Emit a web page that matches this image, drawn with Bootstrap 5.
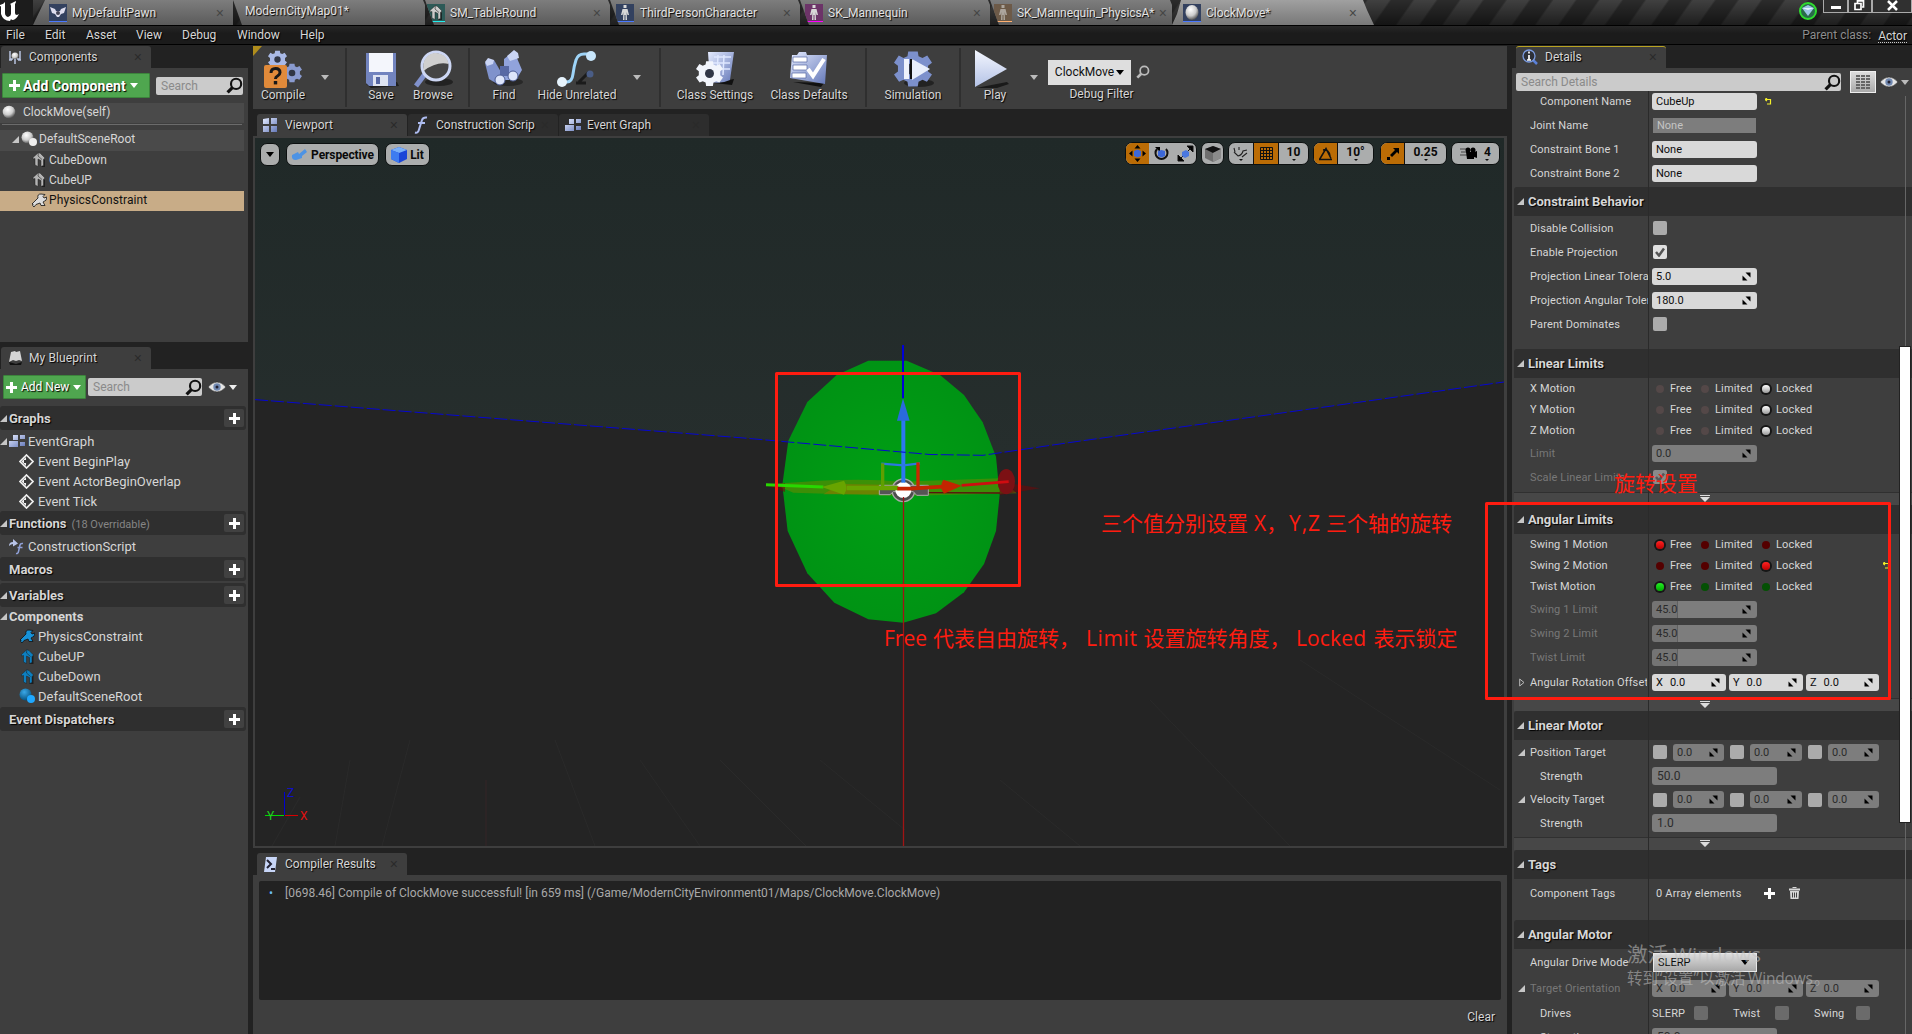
<!DOCTYPE html>
<html lang="en">
<head>
<meta charset="utf-8">
<title>ClockMove - Blueprint Editor</title>
<link rel="stylesheet" href="https://cdn.jsdelivr.net/npm/bootstrap@5.3.0/dist/css/bootstrap.min.css">
<style>
html,body{height:100%;overflow:hidden}
body{background:#222;color:#d6d6d6;font-family:Roboto,"Liberation Sans",sans-serif;font-size:12px;line-height:1;text-shadow:none;width:1912px;height:1034px;margin:0}
svg{display:block;flex:none}
.sh{text-shadow:1px 1px 1px #000}
.titlebar{height:25px;background:linear-gradient(#0000,#0008),repeating-linear-gradient(125deg,#2b2b2b 0 17px,#404040 19px 36px,#2b2b2b 38px)}
.logo{width:33px;padding-left:0;background:#1c1c1c}
.doc{height:25px;background:linear-gradient(#7d7d7d,#5b5b5b);color:#e2e2e2;padding-right:9px;clip-path:polygon(0 0,calc(100% - 2px) 0,calc(100% + 8px) 100%,9px 100%);margin-right:0}
.doc.first{clip-path:polygon(12px 0,100% 0,100% 100%,0 100%)}
.doc.now{background:linear-gradient(#a0a0a0,#787878);clip-path:polygon(9px 0,calc(100% - 11px) 0,calc(100% - 7px) 10px,100% 100%,0 100%,5px 14px)}
.docicon{width:18px;height:18px;border-bottom:1px solid #4a78ff;background:#33415f}
.cls{color:#2a2a2a;font-size:14px;font-family:"Liberation Sans",sans-serif;line-height:10px}
.doc .cls{color:#454545}
.menubar{height:20px;background:linear-gradient(#272727,#1b1b1b 40%,#1b1b1b);border-top:1px solid #000;border-bottom:1px solid #000;padding-left:6px}
.winbtn{height:13px;border:1px solid #aaa;border-top:0;background:#303030;color:#fff}
.leftcol{width:248px;margin-right:5px}
.midcol{width:1254px;margin-right:5px}
.rightcol{width:400px}
.ptab{width:150px;height:22px;background:#3e3e3e;border-radius:3px 3px 0 0;padding-right:9px}
.ptab.off{background:#2d2d2d}
.pbody{background:#3e3e3e}
.greenbtn{background:#4fa64f;border:1px solid #3c843c;color:#fff;border-radius:1px}
.find{background:#cbcbcb;color:#8a8a8a;border-radius:2px;height:18px}
.trow{height:20px;font-size:13px}
.trow.lit{background:#4a4a4a}
.trow.sel{background:#c8ac87;color:#111}
.tree .trow{font-size:12px;padding-bottom:3px}
.sec{height:24px;background:#2f2f2f;width:246px;border-radius:3px;font-size:13px;font-weight:700}
.plus{width:20px;height:18px;background:#414141;border-radius:2px;margin-right:2px}
.toolbar2{height:63px;background:#3e3e3e}
.tool{height:57px;padding-bottom:5px}
.vr2{width:2px;height:59px;background:#2f2f2f}
.vp{height:712px;border:2px solid #3e3e3e;border-right-width:3px}
.pill{height:23px;background:#abadad;color:#0a0a0a;border:1px solid #0c1010;border-radius:7px;font-weight:700;overflow:hidden;font-size:12px}
.pill .on{background:#bb6c05}
.pill .cellx{height:100%;position:relative}
.dot:after{content:"";position:absolute;bottom:3px;left:50%;margin-left:-2px;border:2px solid transparent;border-top-color:#111;border-bottom:0}
.dot span{margin-bottom:4px}
.log{height:119px;background:#222;border-radius:2px;color:#a9a9a9}
.details{height:945px;overflow:hidden;font-size:11px;position:relative;letter-spacing:.14px}
.details:after{content:"";position:absolute;left:136px;top:0;bottom:0;width:1px;background:#2a2a2a}
.prow{height:24px;display:flex;align-items:center;padding-left:18px}
.prow.m{height:21px}
.prow .lab{width:119px;flex:none;overflow:hidden;white-space:nowrap;line-height:16px;padding-top:1px}
.prow.m .lab{padding-top:0}
.prow .lab.in{padding-left:10px}
.prow.dim .lab{color:#787878}
.cat{height:29px;background:#2f2f2f;margin-left:2px;padding-left:3px;font-size:13px;font-weight:700;border-radius:3px 0 0 0;letter-spacing:0}
.strip{height:13px;margin-left:2px;background:#474747;border-top:1px solid #303030;padding:2px 0 0 186px}
.val{height:17px;width:105px;background:#d9d9d9;color:#0d0d0d;border-radius:3px;margin-left:3px;padding:0 6px 0 4px;display:flex;align-items:center;justify-content:space-between;letter-spacing:0}
.val.g{background:#7d7d7d;color:#2b2b2b}
.val.wide{width:125px;height:18px;font-size:12px;padding-left:5px}
.val.t{width:74px}
.val.s{width:51px;margin-left:6px}
.val.fillx{background:linear-gradient(90deg,#747474 25px,#606060 25px,#606060 26px,#7d7d7d 26px)}
.cb{width:14px;height:14px;background:#ababab;border-radius:2px;margin-left:4px;flex:none;display:flex;align-items:center;justify-content:center}
.cb.off{background:#6b6b6b}
.rd{width:8px;height:8px;border-radius:50%;background:#544848;flex:none}
.rd.r{background:#540000}.rd.g{background:#045004}
.rd.a{box-shadow:0 0 0 2px #161616;background:linear-gradient(#fff,#999)}
.rd.a.r{background:linear-gradient(#f22,#b00)}.rd.a.g{background:linear-gradient(#2e2,#0a0)}
.thumb{position:absolute;left:388px;top:258px;width:10px;height:475px;background:#fff;box-shadow:0 0 0 1px #222;z-index:2}
.rail{position:absolute;left:393px;top:7px;bottom:0;width:1px;background:#666}
.ov{position:absolute;left:0;top:0;pointer-events:none;z-index:5}
</style>
<script src="https://cdn.jsdelivr.net/npm/bootstrap@5.3.0/dist/js/bootstrap.bundle.min.js"></script>
</head>
<body class="d-flex flex-column position-relative">
<svg width="0" height="0" class="position-absolute">
 <defs>
  <linearGradient id="bl" x1="0" y1="0" x2="1" y2="1"><stop offset="0" stop-color="#e4ebff"/><stop offset="1" stop-color="#6478b8"/></linearGradient>
  <linearGradient id="wg" x1="0" y1="0" x2="0" y2="1"><stop offset="0" stop-color="#f4f7ff"/><stop offset="1" stop-color="#b4c2e6"/></linearGradient>
  <radialGradient id="ball" cx=".4" cy=".3" r=".7"><stop offset="0" stop-color="#fff"/><stop offset=".6" stop-color="#ccc"/><stop offset="1" stop-color="#555"/></radialGradient>
  <radialGradient id="bball" cx=".4" cy=".3" r=".7"><stop offset="0" stop-color="#3aa8e8"/><stop offset="1" stop-color="#06527f"/></radialGradient>
  <symbol id="spin" viewBox="0 0 9 9"><path d="M3.500 .5H8.500V5.500zM.5 3.500V8.500H5.500z"/></symbol>
  <symbol id="tri" viewBox="0 0 7 7"><path d="M7 0V7H0z" fill="#c6c6c6"/></symbol>
  <symbol id="dn" viewBox="0 0 8 5"><path d="M0 0H8L4 5z"/></symbol>
  <symbol id="mag" viewBox="0 0 16 16"><circle cx="9.500" cy="6.500" r="4.800" fill="none" stroke="currentColor" stroke-width="2"/><path d="M6 10L1.500 14.500" stroke="currentColor" stroke-width="3"/></symbol>
  <symbol id="pl" viewBox="0 0 11 11"><path d="M4 0h3v4h4v3H7v4H4V7H0V4h4z" fill="#fff"/></symbol>
  <symbol id="eye" viewBox="0 0 18 12"><path d="M0 6Q9-4 18 6Q9 16 0 6" fill="#e4e4e4" stroke="#222" stroke-width=".6"/><circle cx="9" cy="6" r="3.700" fill="#7088b0"/><circle cx="9" cy="6" r="1.500" fill="#223"/></symbol>
  <symbol id="house" viewBox="0 0 14 15"><path d="M9 3l4 4v8H9z" fill="#111" opacity=".7"/><path d="M6.500 .5L8.500 1.500 12.500 5.500V7.500L11.500 7.200V13.500L9 14.500V8.500L6 7V14.500L3 13V6.500L1 7V5.500z" fill="currentColor" stroke="#222" stroke-width=".5"/><path d="M6.500 .5L6 4 10 7.500" stroke="#222" stroke-width=".6" fill="none"/></symbol>
  <symbol id="cons" viewBox="0 0 16 14"><path d="M1 11L7 5Q6 1 10 1l4 .5-2 2 1 1.500 3-1q0 4-4 5l2 3.500h-4l-1-2.500-4 1.500-2 2.500q-2-1-1-3z" fill="currentColor" stroke="#111" stroke-width=".8"/></symbol>
  <symbol id="diam" viewBox="0 0 15 15"><path d="M7.500 1L14 7.500 7.500 14 1 7.500z" fill="none" stroke="#eee" stroke-width="1.700"/><path d="M7 3v9L2.500 7.500z" fill="#eee"/><path d="M5 6h3V4l3 3.500L8 11V9H5z" fill="#3a3a3a"/></symbol>
  <symbol id="eg" viewBox="0 0 16 12"><path d="M4 0h5v5H4zM11 0h5v4h-5zM0 6h9v6H0zM11 7h5v4h-5z" fill="url(#bl)"/></symbol>
  <symbol id="gear" viewBox="-12 -12 24 24"><path d="M-3-11h6l.5 3 2.500 1 3-1.500 3 4.500-2.500 2v3.500l2.500 2-3.200 4.500-2.800-1.200-2.500 1.200-.5 3h-6l-.5-3-2.500-1.200-2.800 1.200L-12 3.500l2.500-2V-2L-12-4l3-4.500 3 1.500 2.500-1z"/><circle r="4" fill="#303646"/></symbol>
  <symbol id="more" viewBox="0 0 10 7"><path d="M0 0h10v1H0zM0 2h10L5 7z" fill="#ddd"/></symbol>
  <symbol id="person" viewBox="0 0 18 17"><path d="M7.500 1h3v3h-3zM6.500 5h5l1.500 6h-1.500l-.8-3 .3 8H9.500V11h-1v5H7l.3-8-.8 3H5z" fill="#d8d8d8"/></symbol>
  <symbol id="undo" viewBox="0 0 7 7"><path d="M0 1.500h5.500v4.500H2M0 1.500l2-1.500M0 1.500l2 1.500" fill="none" stroke="#f2ee2a" stroke-width="1.200"/></symbol>
 </defs>
</svg>

<header class="titlebar d-flex flex-none">
 <div class="logo"><svg width="22" height="22" viewBox="0 0 22 22"><path d="M0 5Q4 4 5 2v11q0 3 3 4 3-1 3-3V6q0-2-1-2 2-1 6-3 0 2-1 3v9q0 2 2 2l2-1q-3 6-7 6l-1-1-1 2q-7 0-9-7V7q0-1-1-1z" fill="#fff"/></svg></div>
 <div class="doc first d-flex align-items-center" style="width:200px"><div class="docicon ms-3"><svg width="18" height="17"><path d="M1 3l5 2 1 2h4l1-2 5-2-2 6-3 1-2 3H8L6 10 3 9z" fill="#dde"/><circle cx="9" cy="9" r="2" fill="#445"/></svg></div><span class="sh" style="margin-left:5px">MyDefaultPawn</span><span class="cls ms-auto">×</span></div>
 <div class="doc d-flex align-items-center" style="width:192px"><span class="sh" style="margin:-3px 0 0 12px">ModernCityMap01*</span></div>
 <div class="doc d-flex align-items-center" style="width:185px"><div class="docicon" style="margin-left:2px;border-color:#2ee;background:#2d5a57;color:#ccc"><svg width="18" height="17"><use href="#house" x="2" y="1" width="14" height="15"/></svg></div><span class="sh" style="margin-left:5px">SM_TableRound</span><span class="cls ms-auto">×</span></div>
 <div class="doc d-flex align-items-center" style="width:190px"><div class="docicon" style="margin-left:6px"><svg width="18" height="17"><use href="#person"/></svg></div><span class="sh" style="margin-left:6px">ThirdPersonCharacter</span><span class="cls ms-auto">×</span></div>
 <div class="doc d-flex align-items-center" style="width:190px"><div class="docicon" style="margin-left:5px;background:#6c3468;border-color:#f0f"><svg width="18" height="17"><use href="#person"/></svg></div><span class="sh" style="margin-left:5px">SK_Mannequin</span><span class="cls ms-auto">×</span></div>
 <div class="doc d-flex align-items-center" style="width:182px"><div class="docicon" style="margin-left:4px;background:#6d5a48;border-color:#ffb070"><svg width="18" height="17" opacity=".6"><use href="#person"/></svg></div><span class="sh" style="margin-left:5px;letter-spacing:-.1px">SK_Mannequin_PhysicsA*</span><span class="cls ms-auto" style="margin-right:-4px">×</span></div>
 <div class="doc now d-flex align-items-center" style="width:202px;padding-right:17px"><div class="docicon" style="margin-left:11px"><svg width="18" height="17"><ellipse cx="9" cy="8.500" rx="6.500" ry="7.500" fill="url(#ball)"/></svg></div><span class="sh" style="margin-left:5px">ClockMove*</span><span class="cls ms-auto">×</span></div>
 <div class="ms-auto d-flex">
  <svg width="26" height="24"><circle cx="11" cy="11" r="8" fill="#2a6a4a" stroke="#2fdc2f" stroke-width="2"/><path d="M5 8l6-3 6 3-6 8z" fill="#9cc4e4"/><path d="M5 8l6 2 6-2" fill="#e8f4ff"/></svg>
  <div class="winbtn" style="width:25px"><svg width="24" height="12"><path d="M7 6h10v3H7z" fill="#fff"/></svg></div>
  <div class="winbtn" style="width:24px"><svg width="22" height="12"><path d="M6 3.500h6v6H6zM8.500 3V.8h6V7H13" fill="none" stroke="#fff" stroke-width="1.700"/></svg></div>
  <div class="winbtn" style="width:40px"><svg width="38" height="12"><path d="M15 1l9 9M24 1l-9 9" stroke="#fff" stroke-width="2.500"/></svg></div>
 </div>
</header>
<nav class="menubar d-flex align-items-center sh">
 <span style="width:39px">File</span><span style="width:41px">Edit</span><span style="width:50px">Asset</span><span style="width:46px">View</span><span style="width:55px">Debug</span><span style="width:63px">Window</span><span>Help</span>
 <span class="ms-auto" style="color:#8d8d8d;margin-right:7px">Parent class:</span><span style="border-bottom:1px dotted #ccc;margin:2px 5px 0 0">Actor</span>
</nav>

<main class="d-flex flex-grow-1" style="padding-top:1px;min-height:0">
 <!-- component tree and blueprint members -->
 <aside class="leftcol d-flex flex-column">
  <div class="ptab d-flex align-items-center" style="margin-left:1px"><svg width="14" height="15" style="margin-left:7px"><circle cx="7" cy="6" r="3.500" fill="url(#ball)"/><path d="M2 1v8h3M12 1v8h-3M7 9v5M1 10h3M10 10h3" stroke="#b8c4e0" stroke-width="1.500" fill="none"/></svg><span class="sh" style="margin-left:7px">Components</span><span class="cls ms-auto">×</span></div>
  <div class="pbody tree" style="height:274px">
   <div class="d-flex align-items-center" style="padding:5px 0 0 2px;height:30px">
    <div class="greenbtn d-flex align-items-center sh fw-bold" style="width:148px;height:25px;font-size:14px;padding-left:6px;white-space:nowrap"><svg width="11" height="11"><use href="#pl"/></svg><span style="margin-left:3px;letter-spacing:.1px">Add Component</span><svg width="8" height="5" fill="#fff" style="margin-left:4px"><use href="#dn"/></svg></div>
    <div class="find d-flex align-items-center justify-content-between" style="width:87px;margin-left:6px;padding-left:5px"><span>Search</span><svg width="17" height="17" style="color:#111"><use href="#mag"/></svg></div>
   </div>
   <div class="trow lit d-flex align-items-center" style="margin-top:5px;width:244px"><svg width="15" height="16" style="margin-left:2px"><circle cx="7" cy="8" r="6.300" fill="url(#ball)"/></svg><span style="margin-left:6px">ClockMove(self)</span></div>
   <div style="height:1px;background:#6b6b6b;margin:1px 6px 5px 2px;width:240px"></div>
   <div class="trow lit d-flex align-items-center" style="width:244px;height:21px"><svg width="7" height="7" style="margin-left:12px"><use href="#tri"/></svg><svg width="17" height="16" style="margin-left:2px"><circle cx="6.500" cy="6.500" r="6" fill="url(#ball)"/><circle cx="12" cy="11" r="4" fill="#eee"/></svg><span style="margin-left:1px">DefaultSceneRoot</span></div>
   <div class="trow d-flex align-items-center" style="padding-left:32px"><svg width="14" height="15" style="color:#b4b4b4"><use href="#house"/></svg><span style="margin-left:3px">CubeDown</span></div>
   <div class="trow d-flex align-items-center" style="padding-left:32px"><svg width="14" height="15" style="color:#b4b4b4"><use href="#house"/></svg><span style="margin-left:3px">CubeUP</span></div>
   <div class="trow sel d-flex align-items-center" style="padding-left:31px;width:244px"><svg width="16" height="14" style="color:#ddd"><use href="#cons"/></svg><span style="margin-left:2px;letter-spacing:.1px">PhysicsConstraint</span></div>
  </div>
  <div class="ptab d-flex align-items-center" style="margin:5px 0 0 1px"><svg width="15" height="16" style="margin-left:7px"><path d="M1 12L3 2l4-1 1 1 4-1 2 10-3-1-3 1-3-1z" fill="#d5d5d5"/><path d="M1 12l7 2 6-2-1 3H2z" fill="#111"/></svg><span class="sh" style="margin-left:6px;letter-spacing:.1px">My Blueprint</span><span class="cls ms-auto">×</span></div>
  <div class="pbody flex-grow-1">
   <div class="d-flex align-items-center" style="padding:0 0 1px 3px;height:37px">
    <div class="greenbtn d-flex align-items-center sh" style="width:83px;height:24px;padding-left:2px"><svg width="11" height="11"><use href="#pl"/></svg><span style="margin-left:4px;white-space:nowrap">Add New</span><svg width="8" height="5" fill="#fff" style="margin-left:4px"><use href="#dn"/></svg></div>
    <div class="find d-flex align-items-center justify-content-between" style="width:114px;margin-left:2px;padding-left:5px"><span>Search</span><svg width="17" height="17" style="color:#111"><use href="#mag"/></svg></div>
    <svg width="18" height="12" style="margin-left:6px"><use href="#eye"/></svg><svg width="8" height="5" fill="#eee" style="margin-left:3px"><use href="#dn"/></svg>
   </div>
   <div class="sec d-flex align-items-center"><svg width="7" height="7"><use href="#tri"/></svg><span class="sh" style="margin-left:2px">Graphs</span><div class="plus d-flex align-items-center justify-content-center ms-auto"><svg width="11" height="11"><use href="#pl"/></svg></div></div>
   <div class="trow d-flex align-items-center" style="margin-top:1px"><svg width="7" height="7"><use href="#tri"/></svg><svg width="16" height="12" style="margin-left:2px"><use href="#eg"/></svg><span style="margin-left:3px">EventGraph</span></div>
   <div class="trow d-flex align-items-center" style="padding-left:19px"><svg width="15" height="15"><use href="#diam"/></svg><span style="margin-left:4px">Event BeginPlay</span></div>
   <div class="trow d-flex align-items-center" style="padding-left:19px"><svg width="15" height="15"><use href="#diam"/></svg><span style="margin-left:4px">Event ActorBeginOverlap</span></div>
   <div class="trow d-flex align-items-center" style="padding-left:19px"><svg width="15" height="15"><use href="#diam"/></svg><span style="margin-left:4px">Event Tick</span></div>
   <div class="sec d-flex align-items-center"><svg width="7" height="7"><use href="#tri"/></svg><span class="sh" style="margin-left:2px">Functions</span><span class="fw-normal" style="margin:2px 0 0 5px;color:#858585;font-size:11px">(18 Overridable)</span><div class="plus d-flex align-items-center justify-content-center ms-auto"><svg width="11" height="11"><use href="#pl"/></svg></div></div>
   <div class="trow d-flex align-items-center" style="height:22px"><svg width="18" height="17" style="margin-left:8px"><path d="M1 8Q1 4 5 4V1l5 4.500-5 3V6Q3 6 1 8" fill="#b8c4e8"/><path d="M8 15.500q2 .5 2.500-2L12 7q.5-2 3-1.500M9.500 9.500h5" stroke="#8fa0d8" stroke-width="1.500" fill="none"/></svg><span style="margin-left:2px">ConstructionScript</span></div>
   <div class="sec d-flex align-items-center"><span class="sh" style="margin-left:9px">Macros</span><div class="plus d-flex align-items-center justify-content-center ms-auto"><svg width="11" height="11"><use href="#pl"/></svg></div></div>
   <div class="sec d-flex align-items-center" style="margin-top:2px"><svg width="7" height="7"><use href="#tri"/></svg><span class="sh" style="margin-left:2px">Variables</span><div class="plus d-flex align-items-center justify-content-center ms-auto"><svg width="11" height="11"><use href="#pl"/></svg></div></div>
   <div class="trow d-flex align-items-center fw-bold" style="height:19px"><svg width="7" height="7"><use href="#tri"/></svg><span style="margin-left:2px">Components</span></div>
   <div class="trow d-flex align-items-center" style="padding-left:19px"><svg width="16" height="14" style="color:#1792d8"><use href="#cons"/></svg><span style="margin-left:3px">PhysicsConstraint</span></div>
   <div class="trow d-flex align-items-center" style="padding-left:20px"><svg width="15" height="15" style="color:#0d7fc0"><use href="#house"/></svg><span style="margin-left:3px">CubeUP</span></div>
   <div class="trow d-flex align-items-center" style="padding-left:20px"><svg width="15" height="15" style="color:#0d7fc0"><use href="#house"/></svg><span style="margin-left:3px">CubeDown</span></div>
   <div class="trow d-flex align-items-center" style="padding-left:19px"><svg width="17" height="16"><circle cx="6.500" cy="6.500" r="6" fill="url(#bball)"/><circle cx="12" cy="11" r="4" fill="#1fa8ff"/></svg><span style="margin-left:2px">DefaultSceneRoot</span></div>
   <div class="sec d-flex align-items-center" style="margin-top:1px"><span class="sh" style="margin-left:9px">Event Dispatchers</span><div class="plus d-flex align-items-center justify-content-center ms-auto"><svg width="11" height="11"><use href="#pl"/></svg></div></div>
  </div>
 </aside>

 <!-- toolbar, viewport and compiler log -->
 <section class="midcol d-flex flex-column">
  <div class="toolbar2 d-flex align-items-center sh position-relative">
   <svg width="9" height="10" class="position-absolute top-0 start-0"><path d="M0 0H9L0 10z" fill="#b08d1c"/></svg>
   <div class="tool d-flex flex-column align-items-center justify-content-between" style="width:60px"><svg width="40" height="40"><use href="#gear" x="5" y="1" width="19" height="19" fill="#a9b9e6"/><use href="#gear" x="19" y="14" width="20" height="20" fill="#8a9bd0"/><rect x="1" y="16" width="23" height="23" rx="2" fill="#e08a3a"/><path d="M8 24q0-4.500 4.500-4.500t4.500 4q0 2-2.500 3.500-2 1-2 3" stroke="#181818" stroke-width="3" fill="none"/><rect x="10.800" y="32" width="3.400" height="3.400" fill="#181818"/></svg><span>Compile</span></div>
   <svg width="8" height="5" fill="#bbb" style="margin-left:8px"><use href="#dn"/></svg><div class="vr2" style="margin-left:16px"></div>
   <div class="tool d-flex flex-column align-items-center justify-content-between" style="width:52px;margin-left:8px"><svg width="36" height="40"><path d="M34 33l2 4-28 2-5-4z" fill="#111" opacity=".7"/><path d="M3 4h30v33H6l-3-3z" fill="#7284bf"/><path d="M6 4h24v19H6z" fill="#f4f6fc"/><path d="M10 26h15v11H10z" fill="#dfe4f2"/><path d="M13 28h4v7h-4z" fill="#5768a4"/></svg><span>Save</span></div>
   <div class="tool d-flex flex-column align-items-center justify-content-between" style="width:52px"><svg width="40" height="40"><ellipse cx="26" cy="33" rx="14" ry="4" fill="#111" opacity=".6"/><path d="M12 25L3 37" stroke="#8192cc" stroke-width="5"/><circle cx="23" cy="17" r="14" fill="#454545" stroke="#cdd7f4" stroke-width="3"/><path d="M10.500 18a12.500 12.500 0 0 1 25-3Q24 12 10.500 22z" fill="#cfcfcf"/></svg><span>Browse</span></div>
   <div class="vr2" style="margin-left:9px"></div>
   <div class="tool d-flex flex-column align-items-center justify-content-between" style="width:50px;margin-left:9px"><svg width="40" height="40"><ellipse cx="24" cy="33" rx="15" ry="4" fill="#111" opacity=".5"/><path d="M1 14l9-3 11 19-6 6-10-6z" fill="#7f92cc"/><path d="M20 10l10-8 8 19-6 10-12 0z" fill="#91a3dc"/><path d="M16 17h9v10h-9z" fill="#5768a4"/><path d="M1 13l3-4 6 2-1 4-6 2zM23 7l7-6 4 3 1 5-9 3z" fill="#c9d4f4"/><circle cx="16" cy="31" r="5" fill="#dde5fa" stroke="#4c5c94"/><circle cx="29" cy="27" r="5" fill="#dde5fa" stroke="#4c5c94"/></svg><span>Find</span></div>
   <div class="tool d-flex flex-column align-items-center justify-content-between" style="width:96px"><svg width="42" height="40"><path d="M23 33L33 23M20 34h10" stroke="#1b1b1b" stroke-width="3"/><path d="M6 33h5q5 0 6-8t3-14q2-6 8-6h6" stroke="#9ed4f8" stroke-width="3" fill="none"/><circle cx="6" cy="33" r="5" fill="#e6f3fd"/><circle cx="35" cy="7" r="5" fill="#c8e6fc"/><circle cx="34" cy="25" r="3.500" fill="#4a5d86"/></svg><span>Hide Unrelated</span></div>
   <svg width="8" height="5" fill="#bbb" style="margin-left:8px"><use href="#dn"/></svg><div class="vr2" style="margin-left:18px"></div>
   <div class="tool d-flex flex-column align-items-center justify-content-between" style="width:94px;margin-left:7px"><svg width="42" height="40"><path d="M20 34l18 2 2-6z" fill="#111"/><path d="M14 3h26l-4 28q-8 4-20 2z" fill="url(#bl)"/><path d="M20 8h17M19 14h17M22 20h14M24 6l-1 20M30 6l-1 20" stroke="#dfe8ff" stroke-width="1.500"/><use href="#gear" x="2" y="11" width="27" height="27" fill="#f2f5fc"/></svg><span>Class Settings</span></div>
   <div class="tool d-flex flex-column align-items-center justify-content-between" style="width:94px"><svg width="42" height="40"><path d="M5 33l28 5 3-4z" fill="#111"/><path d="M4 6h5l2-3h7l1 3h20l-2 29L2 29z" fill="url(#bl)"/><path d="M5 8h14v5H5zM5 16h14v5H5zM4 24h14v5H4z" fill="#fff" stroke="#5768a4" stroke-width=".7"/><path d="M20 20l5 7 11-17" stroke="#fff" stroke-width="4" fill="none"/></svg><span>Class Defaults</span></div>
   <div class="vr2" style="margin-left:9px"></div>
   <div class="tool d-flex flex-column align-items-center justify-content-between" style="width:76px;margin-left:8px"><svg width="42" height="40"><ellipse cx="27" cy="34" rx="15" ry="4" fill="#111" opacity=".6"/><use href="#gear" x="2" y="1" width="38" height="38" fill="#7c90cc"/><rect x="12" y="10" width="5" height="20" fill="#eef2fc"/><rect x="18" y="10" width="3" height="20" fill="#111"/><path d="M20 10l18 10-18 11z" fill="#e8eefb"/></svg><span>Simulation</span></div>
   <div class="vr2" style="margin-left:8px"></div>
   <div class="tool d-flex flex-column align-items-center justify-content-between" style="width:50px;margin-left:9px"><svg width="42" height="40"><path d="M2 39l31-6 2 2-12 4z" fill="#111" opacity=".8"/><path d="M1 1l32 19L1 38z" fill="url(#wg)"/></svg><span>Play</span></div>
   <svg width="8" height="5" fill="#bbb" style="margin-left:10px"><use href="#dn"/></svg>
   <div class="d-flex flex-column align-items-center" style="margin:4px 0 0 10px;width:107px">
    <div class="d-flex align-items-center align-self-start"><div class="d-flex align-items-center justify-content-center" style="width:83px;height:25px;background:#dedede;color:#111;text-shadow:none">ClockMove<svg width="8" height="5" style="margin-left:2px"><use href="#dn"/></svg></div><svg width="14" height="14" style="margin-left:5px;color:#bbb"><use href="#mag"/></svg></div>
    <span style="margin-top:3px">Debug Filter</span>
   </div>
  </div>
  <div class="d-flex" style="margin-top:5px;padding-left:4px;gap:1px">
   <div class="ptab d-flex align-items-center"><svg width="14" height="14" style="margin-left:6px"><path d="M0 1l6-1v6H0zM8 0h6v6H8zM0 8h6v6H0zM8 8h6v6H8z" fill="url(#bl)"/></svg><span class="sh" style="margin-left:8px">Viewport</span><span class="cls ms-auto">×</span></div>
   <div class="ptab off d-flex align-items-center"><svg width="14" height="18" style="margin-left:6px"><path d="M1 16.500q3 1 4-3L8 4q1-3 5-2.500M4 7h7" stroke="#aebcf0" stroke-width="2" fill="none"/></svg><span class="sh" style="margin-left:8px;white-space:nowrap">Construction Scrip</span><span class="cls ms-auto">×</span></div>
   <div class="ptab off d-flex align-items-center"><svg width="16" height="12" style="margin-left:6px"><use href="#eg"/></svg><span class="sh" style="margin-left:6px">Event Graph</span><span class="cls ms-auto">×</span></div>
  </div>
  <div class="vp position-relative">
   <svg width="1249" height="708" viewBox="255 138 1249 708">
    <defs><linearGradient id="sky" x1="0" y1="0" x2="0" y2="1"><stop offset="0" stop-color="#202928"/><stop offset="1" stop-color="#262e2d"/></linearGradient>
    <radialGradient id="disc"><stop offset="0" stop-color="#00a014"/><stop offset="1" stop-color="#009314"/></radialGradient></defs>
    <rect x="255" y="138" width="1249" height="708" fill="#242424"/>
    <path d="M255 138H1504V382L990 454 940 453 740 437.700 255 399.600z" fill="url(#sky)"/>
    <g stroke="#2a2a2a" fill="none"><path d="M300 797L272 846M350 760L335 846M410 740L382 846M555 740L595 846M640 760L700 846M720 760L806 846M820 760L905 830M1000 780L1080 846M1150 700L1290 846M1300 660L1500 790"/><path d="M486 780V846" stroke="#352526"/></g>
    <g transform="translate(740 330) scale(.33333)">
     <path d="M385 92H500L600 135 672 195 728 277 768 380 779 495 768 603 732 702 672 787 588 850 490 878 385 868 283 818 202 730 143 603 127 465 145 332 202 216 290 135z" fill="url(#disc)"/>
     <path d="M100 462Q350 440 480 455L780 445 830 490 480 498 160 488z" fill="#5c8a00" opacity=".65"/>
     <path d="M300 462L480 465 480 492 250 493z" fill="#8a7a00" opacity=".6"/>
     <path d="M90 470l45 16V460zM780 455L900 475 780 495z" fill="#6b0a0c" opacity=".6"/>
     <ellipse cx="799" cy="455" rx="26" ry="38" fill="#7c1014"/>
     <path d="M560 488L780 489" stroke="#5a1010" stroke-width="4"/>
     <path d="M489 45V205" stroke="#0000d8" stroke-width="6"/>
     <circle cx="490" cy="481" r="34" fill="#4c4c4c" stroke="#aaa" stroke-width="4"/>
     <path d="M418 466H565V496H530L520 485H460L450 494H418z" fill="#555" stroke="#aaa" stroke-width="3"/>
     <circle cx="490" cy="480" r="24" fill="#fff"/>
     <path d="M490 270V458" stroke="#2c78f0" stroke-width="12"/><path d="M489 205L509 272H471z" fill="#2a6adc"/>
     <path d="M424 401L490 406 540 400" stroke="#2c78e0" stroke-width="7" fill="none"/>
     <path d="M428 400V470" stroke="#5f9f00" stroke-width="10"/><path d="M534 397V470" stroke="#c82800" stroke-width="10"/>
     <path d="M78 464L250 471" stroke="#28d800" stroke-width="9"/><path d="M320 474H475" stroke="#68a400" stroke-width="13"/><path d="M245 471L312 452Q326 473 312 494z" fill="#68a400"/>
     <path d="M472 476H510L608 470" stroke="#c42400" stroke-width="11" fill="none"/><path d="M665 467L610 449Q596 470 612 491z" fill="#c42400"/><path d="M665 466L806 455" stroke="#d00c10" stroke-width="8"/>
    </g>
    <path d="M255 399.600L740 437.700 930 454.500 983 455.300 1070 442.500 1504 382" fill="none" stroke="#0606d0" stroke-width="1" stroke-dasharray="13 3"/>
    <path d="M903.500 497V846" stroke="#a01414" stroke-width="1.300"/>
    <path d="M284.500 792V815" stroke="#0000d0"/><path d="M265 815.500H284" stroke="#00d800"/><path d="M285 815.500H298" stroke="#d80000"/>
    <g font-size="12"><text x="287" y="797" fill="#1010c8">Z</text><text x="267" y="820" fill="#20d020">Y</text><text x="300" y="820" fill="#e01010">X</text></g>
   </svg>
   <div class="position-absolute d-flex" style="left:5px;top:5px;gap:6px">
    <div class="pill d-flex align-items-center justify-content-center" style="width:20px"><svg width="8" height="5"><use href="#dn"/></svg></div>
    <div class="pill d-flex align-items-center justify-content-center" style="width:93px;gap:4px;letter-spacing:-.1px"><svg width="16" height="13"><path d="M1 7l6-3 1 2 6-5 2 3-5 4 0 2-6 2q-5 0-4-5" fill="#4d93e4"/></svg>Perspective</div>
    <div class="pill d-flex align-items-center justify-content-center" style="width:45px;gap:3px"><svg width="16" height="16"><path d="M8 0l8 3v9l-8 4-8-4V3z" fill="#1b46d8"/><path d="M8 0l8 3-8 3-8-3z" fill="#7ab0f8"/><path d="M0 3l8 3v10l-8-4z" fill="#3e7cf0"/></svg>Lit</div>
   </div>
   <div class="position-absolute d-flex" style="right:4px;top:4px;gap:4px">
    <div class="pill d-flex" style="width:72px"><div class="cellx on d-flex align-items-center" style="width:23px;padding-left:3px"><svg width="17" height="17"><path d="M8.500 0l3 3.500h-6zM8.500 17l3-3.500h-6zM0 8.500l3.500-3v6zM17 8.500l-3.500-3v6z"/><path d="M5 6l3.500-1.500L12 6v5l-3.500 1.500L5 11z" fill="#3c68d8"/></svg></div><div class="cellx d-flex align-items-center" style="width:23px;padding-left:5px"><svg width="15" height="16"><path d="M3 3A6 6 0 1 0 12 3" stroke="#111" stroke-width="2" fill="none"/><path d="M1 1h5v5z"/><path d="M4 5l3.500-1L11 5v5l-3.500 1.500L4 10z" fill="#3c68d8"/></svg></div><div class="cellx d-flex align-items-center" style="padding-left:5px"><svg width="17" height="17"><path d="M16 1v6L10 1zM1 16v-6l6 6zM3 14L14 3" stroke="#111" stroke-width="1"/><path d="M5 7l4-2 3 2v4l-4 2-3-2z" fill="#4a78e0"/></svg></div></div>
    <div class="pill d-flex align-items-center justify-content-center" style="width:23px"><svg width="16" height="17"><path d="M8 1l8 3v9l-8 4-8-4V4z" fill="#6e6e6e"/><path d="M8 1l8 3-8 4-8-4z" fill="#111"/><path d="M8 8l8-4v9l-8 4z" fill="#8b8b8b"/></svg></div>
    <div class="pill d-flex" style="width:81px"><div class="cellx dot" style="width:24px;padding:3px 0 0 4px"><svg width="16" height="14" fill="none" stroke="#222"><path d="M1 6l4 4q4-1 5-5l4-1M2 6l-1-4M6 4V1M9 11l5-4" stroke-width="1.100"/></svg></div><div class="cellx on d-flex align-items-center justify-content-center" style="width:26px;border:solid #111;border-width:0 1px"><svg width="13" height="13"><path d="M.5 .5h12v12H.5zM3.500 0v13M6.500 0v13M9.500 0v13M0 3.500h13M0 6.500h13M0 9.500h13" fill="none" stroke="#111"/></svg></div><div class="cellx dot d-flex align-items-center justify-content-center flex-grow-1"><span>10</span></div></div>
    <div class="pill d-flex" style="width:61px"><div class="cellx on d-flex align-items-center justify-content-center" style="width:24px;border-right:1px solid #111"><svg width="16" height="14"><path d="M1 12.500h13M1.500 12.500L8 1.500l5 10M5 3q6-1 7 6" fill="none" stroke="#111" stroke-width="1.500"/></svg></div><div class="cellx dot d-flex align-items-center justify-content-center flex-grow-1"><span>10°</span></div></div>
    <div class="pill d-flex" style="width:67px;margin-left:2px"><div class="cellx on d-flex align-items-center justify-content-center" style="width:24px;border-right:1px solid #111"><svg width="12" height="12"><path d="M12 0v6l-2-2-5 5-2-2 5-5-2-2zM0 9h3v3H0z"/></svg></div><div class="cellx dot d-flex align-items-center justify-content-center flex-grow-1"><span>0.25</span></div></div>
    <div class="pill d-flex align-items-center" style="width:49px;padding-left:8px"><svg width="17" height="13"><path d="M0 2h6M1 5h6M0 8h7" stroke="#444"/><circle cx="8" cy="3" r="2.500"/><circle cx="13" cy="3" r="2.500"/><path d="M6 5h8l3-1v7l-3-1v2H7z"/></svg><div class="cellx dot d-flex align-items-center" style="margin-left:7px"><span>4</span></div></div>
   </div>
  </div>
  <div class="ptab d-flex align-items-center" style="margin:5px 0 0 4px"><svg width="13" height="15" style="margin-left:7px"><path d="M2 0h11l-2 15H0z" fill="#c8d6f8"/><path d="M3 3l4 4-4 4M7 12h4" stroke="#223" stroke-width="2" fill="none"/></svg><span class="sh" style="margin-left:8px;white-space:nowrap">Compiler Results</span><span class="cls ms-auto">×</span></div>
  <div class="pbody flex-grow-1" style="padding:6px 6px 0">
   <div class="log d-flex" style="padding:6px 0 0 10px"><span style="color:#6cbcf4;width:16px">•</span><span>[0698.46] Compile of ClockMove successful! [in 659 ms] (/Game/ModernCityEnvironment01/Maps/ClockMove.ClockMove)</span></div>
   <div class="text-end sh" style="padding:11px 6px 0 0">Clear</div>
  </div>
 </section>

 <!-- details of the selected constraint -->
 <aside class="rightcol d-flex flex-column">
  <div class="ptab d-flex align-items-center" style="margin-left:4px;border-top:1px solid #b8a222;padding-bottom:2px"><svg width="16" height="16" style="margin-left:6px"><path d="M10 10l5 5" stroke="#5a80d8" stroke-width="2.500"/><circle cx="7" cy="7" r="6" fill="#2d3038" stroke="#7c9ce0" stroke-width="1.300"/><path d="M7 2.500v2M7 6v5M5 11h4" stroke="#fff" stroke-width="1.700"/></svg><span class="sh" style="margin-left:7px">Details</span><span class="cls ms-auto">×</span></div>
  <div class="pbody flex-grow-1" style="min-height:0">
   <div class="d-flex align-items-center" style="height:21px;padding:7px 0 0 4px;position:relative;z-index:3">
    <div class="find d-flex align-items-center justify-content-between flex-none" style="width:325px;padding-left:5px"><span>Search Details</span><svg width="17" height="17" style="color:#111"><use href="#mag"/></svg></div>
    <div class="d-flex align-items-center justify-content-center" style="width:26px;height:22px;margin-left:9px;background:linear-gradient(#ddd,#aaa);border:1px solid #eee;flex:none"><svg width="14" height="14"><path d="M0 1h14M0 4h14M0 7h14M0 10h14M0 13h14" stroke="#666" stroke-width="2" stroke-dasharray="4 1"/></svg></div>
    <svg width="18" height="12" style="margin-left:4px"><use href="#eye"/></svg><svg width="8" height="5" fill="#bbb" style="margin-left:3px"><use href="#dn"/></svg>
   </div>
   <div class="details">
    <div class="rail"></div><div class="thumb"></div>
    <div class="prow" style="padding-top:1px"><span class="lab in">Component Name</span><div class="val">CubeUp</div><svg width="7" height="7" style="margin-left:8px"><use href="#undo"/></svg></div>
    <div class="prow"><span class="lab">Joint Name</span><div class="val g rounded-0" style="width:103px;height:15px;margin-left:4px;color:#c4c4c4">None</div></div>
    <div class="prow"><span class="lab">Constraint Bone 1</span><div class="val">None</div></div>
    <div class="prow"><span class="lab">Constraint Bone 2</span><div class="val">None</div></div>
    <div class="cat d-flex align-items-center sh" style="margin-top:2px"><svg width="7" height="7"><use href="#tri"/></svg><span style="margin-left:4px">Constraint Behavior</span></div>
    <div class="prow"><span class="lab">Disable Collision</span><div class="cb"></div></div>
    <div class="prow"><span class="lab">Enable Projection</span><div class="cb" style="background:#e0e0e0"><svg width="10" height="10"><path d="M1 5l3 3.500 5-7" stroke="#555" stroke-width="2.500" fill="none"/></svg></div></div>
    <div class="prow"><span class="lab" style="width:118px;margin-right:1px">Projection Linear Tolerance</span><div class="val">5.0<svg width="9" height="9"><use href="#spin"/></svg></div></div>
    <div class="prow"><span class="lab" style="width:118px;margin-right:1px">Projection Angular Tolerance</span><div class="val">180.0<svg width="9" height="9"><use href="#spin"/></svg></div></div>
    <div class="prow"><span class="lab">Parent Dominates</span><div class="cb"></div></div>
    <div class="cat d-flex align-items-center sh" style="margin-top:13px"><svg width="7" height="7"><use href="#tri"/></svg><span style="margin-left:4px">Linear Limits</span></div>
    <div class="prow m"><span class="lab">X Motion</span><i class="rd" style="margin-left:7px"></i><span style="width:31px;margin-left:6px">Free</span><i class="rd"></i><span style="width:47px;margin-left:6px">Limited</span><i class="rd a"></i><span style="margin-left:6px">Locked</span></div>
    <div class="prow m"><span class="lab">Y Motion</span><i class="rd" style="margin-left:7px"></i><span style="width:31px;margin-left:6px">Free</span><i class="rd"></i><span style="width:47px;margin-left:6px">Limited</span><i class="rd a"></i><span style="margin-left:6px">Locked</span></div>
    <div class="prow m"><span class="lab">Z Motion</span><i class="rd" style="margin-left:7px"></i><span style="width:31px;margin-left:6px">Free</span><i class="rd"></i><span style="width:47px;margin-left:6px">Limited</span><i class="rd a"></i><span style="margin-left:6px">Locked</span></div>
    <div class="prow dim"><span class="lab">Limit</span><div class="val g">0.0<svg width="9" height="9"><use href="#spin"/></svg></div></div>
    <div class="prow dim"><span class="lab">Scale Linear Limits</span><div class="cb" style="background:#8a8a8a"><svg width="10" height="10"><path d="M1 5l3 3.500 5-7" stroke="#555" stroke-width="2.500" fill="none"/></svg></div></div>
    <div class="strip d-flex align-items-start" style="margin-top:3px"><svg width="10" height="7"><use href="#more"/></svg></div>
    <div class="cat d-flex align-items-center sh"><svg width="7" height="7"><use href="#tri"/></svg><span style="margin-left:4px">Angular Limits</span></div>
    <div class="prow m"><span class="lab">Swing 1 Motion</span><i class="rd r a" style="margin-left:7px"></i><span style="width:31px;margin-left:6px">Free</span><i class="rd r"></i><span style="width:47px;margin-left:6px">Limited</span><i class="rd r"></i><span style="margin-left:6px">Locked</span></div>
    <div class="prow m"><span class="lab">Swing 2 Motion</span><i class="rd r" style="margin-left:7px"></i><span style="width:31px;margin-left:6px">Free</span><i class="rd r"></i><span style="width:47px;margin-left:6px">Limited</span><i class="rd r a"></i><span style="margin-left:6px">Locked</span><svg width="7" height="7" style="margin-left:71px"><use href="#undo"/></svg></div>
    <div class="prow m"><span class="lab">Twist Motion</span><i class="rd g a" style="margin-left:7px"></i><span style="width:31px;margin-left:6px">Free</span><i class="rd g"></i><span style="width:47px;margin-left:6px">Limited</span><i class="rd g"></i><span style="margin-left:6px">Locked</span></div>
    <div class="prow dim"><span class="lab">Swing 1 Limit</span><div class="val g fillx">45.0<svg width="9" height="9"><use href="#spin"/></svg></div></div>
    <div class="prow dim"><span class="lab">Swing 2 Limit</span><div class="val g fillx">45.0<svg width="9" height="9"><use href="#spin"/></svg></div></div>
    <div class="prow dim"><span class="lab">Twist Limit</span><div class="val g fillx">45.0<svg width="9" height="9"><use href="#spin"/></svg></div></div>
    <div class="prow" style="height:26px;padding-left:7px"><svg width="6" height="9"><path d="M.7 1v7L5 4.500z" fill="none" stroke="#bbb"/></svg><span class="lab" style="margin-left:5px;width:117px;margin-right:2px">Angular Rotation Offset</span><div class="val t"><span>X<span style="margin-left:7px">0.0</span></span><svg width="9" height="9"><use href="#spin"/></svg></div><div class="val t"><span>Y<span style="margin-left:7px">0.0</span></span><svg width="9" height="9"><use href="#spin"/></svg></div><div class="val t" style="width:73px"><span>Z<span style="margin-left:7px">0.0</span></span><svg width="9" height="9"><use href="#spin"/></svg></div></div>
    <div class="strip d-flex align-items-start" style="margin-top:3px"><svg width="10" height="7"><use href="#more"/></svg></div>
    <div class="cat d-flex align-items-center sh"><svg width="7" height="7"><use href="#tri"/></svg><span style="margin-left:4px">Linear Motor</span></div>
    <div class="prow" style="padding-left:6px"><svg width="7" height="7"><use href="#tri"/></svg><span class="lab" style="margin-left:5px">Position Target</span><div class="cb"></div><div class="val g s">0.0<svg width="9" height="9"><use href="#spin"/></svg></div><div class="cb" style="margin-left:6px"></div><div class="val g s" style="width:52px">0.0<svg width="9" height="9"><use href="#spin"/></svg></div><div class="cb" style="margin-left:6px"></div><div class="val g s">0.0<svg width="9" height="9"><use href="#spin"/></svg></div></div>
    <div class="prow"><span class="lab in">Strength</span><div class="val g wide">50.0</div></div>
    <div class="prow" style="padding-left:6px;height:23px"><svg width="7" height="7"><use href="#tri"/></svg><span class="lab" style="margin-left:5px">Velocity Target</span><div class="cb"></div><div class="val g s">0.0<svg width="9" height="9"><use href="#spin"/></svg></div><div class="cb" style="margin-left:6px"></div><div class="val g s" style="width:52px">0.0<svg width="9" height="9"><use href="#spin"/></svg></div><div class="cb" style="margin-left:6px"></div><div class="val g s">0.0<svg width="9" height="9"><use href="#spin"/></svg></div></div>
    <div class="prow"><span class="lab in">Strength</span><div class="val g wide">1.0</div></div>
    <div class="strip d-flex align-items-start" style="margin-top:2px"><svg width="10" height="7"><use href="#more"/></svg></div>
    <div class="cat d-flex align-items-center sh"><svg width="7" height="7"><use href="#tri"/></svg><span style="margin-left:4px">Tags</span></div>
    <div class="prow" style="height:28px"><span class="lab">Component Tags</span><span style="margin-left:7px;width:108px;letter-spacing:.2px">0 Array elements</span><svg width="11" height="11"><use href="#pl"/></svg><svg width="11" height="12" style="margin-left:14px"><path d="M0 1.500h11v2H0zM3.500 0h4v1h-4zM1 4h9l-.5 8h-8z" fill="#d8d8d8"/><path d="M3.500 5.500v5M5.500 5.500v5M7.500 5.500v5" stroke="#444"/></svg></div>
    <div class="cat d-flex align-items-center sh" style="margin-top:13px"><svg width="7" height="7"><use href="#tri"/></svg><span style="margin-left:4px">Angular Motor</span></div>
    <div class="prow" style="height:26px"><span class="lab">Angular Drive Mode</span><div class="val rounded-0" style="width:104px;height:19px;margin-left:4px;background:linear-gradient(#dcdcdc,#a8a8a8);border:1px solid #e8e8e8">SLERP<svg width="8" height="5" style="margin-right:1px"><use href="#dn"/></svg></div></div>
    <div class="prow dim" style="height:26px;padding-left:6px"><svg width="7" height="7"><use href="#tri"/></svg><span class="lab" style="margin-left:5px">Target Orientation</span><div class="val t g"><span>X<span style="margin-left:7px">0.0</span></span><svg width="9" height="9"><use href="#spin"/></svg></div><div class="val t g"><span>Y<span style="margin-left:7px">0.0</span></span><svg width="9" height="9"><use href="#spin"/></svg></div><div class="val t g" style="width:73px"><span>Z<span style="margin-left:7px">0.0</span></span><svg width="9" height="9"><use href="#spin"/></svg></div></div>
    <div class="prow"><span class="lab in">Drives</span><span style="margin-left:3px;width:38px">SLERP</span><div class="cb off"></div><span style="margin-left:25px;width:38px">Twist</span><div class="cb off"></div><span style="margin-left:25px;width:38px">Swing</span><div class="cb off"></div></div>
    <div class="prow"><span class="lab in">Strength</span><div class="val g wide">50.0</div></div>
   </div>
  </div>
 </aside>
</main>

<!-- annotations and desktop watermark -->
<svg class="ov" width="1912" height="1034">
 <g fill="none" stroke="#ff1c10" stroke-width="3" stroke-linejoin="round"><path d="M776.500 373.500H1019.500V585.500H776.500z"/><path d="M1486.500 503.500H1889.500V698.500H1486.500z"/></g>
 <g fill="#ff1c10" font-family="'Open Sans','Noto Sans CJK SC',sans-serif" font-size="21">
  <text y="530.500"><tspan x="1101">三个值分别设置</tspan><tspan x="1254">X，</tspan><tspan x="1289" textLength="31">Y,Z</tspan><tspan x="1326">三个轴的旋转</tspan></text>
  <text y="645.500"><tspan x="884">Free</tspan><tspan x="933">代表自由旋转，</tspan><tspan x="1086" textLength="51">Limit</tspan><tspan x="1143.500">设置旋转角度，</tspan><tspan x="1296" textLength="70">Locked</tspan><tspan x="1373.500">表示锁定</tspan></text>
  <text x="1614" y="491">旋转设置</text>
 </g>
 <g fill="#c4c4c4" fill-opacity=".55" font-family="'Open Sans','Noto Sans CJK SC',sans-serif">
  <text y="962" font-size="20.500"><tspan x="1627">激活</tspan><tspan x="1673" textLength="88">Windows</tspan></text>
  <text y="984" font-size="15.500"><tspan x="1627">转到</tspan><tspan x="1657">“设置”</tspan><tspan x="1699">以激活</tspan><tspan x="1748" textLength="65">Windows</tspan><tspan x="1814">。</tspan></text>
 </g>
</svg>
</body>
</html>
